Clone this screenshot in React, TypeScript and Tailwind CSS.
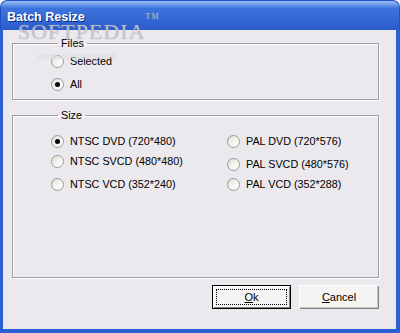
import { useState } from 'react'

const ui = { fontFamily: '"Liberation Sans", Arial, sans-serif' }

// XP-ish radio circle, drawn with css only
const Radio = ({ checked, label, onClick, className = '' }: { checked: boolean, label: string, onClick: () => void, className?: string }) => (
  <div className={`flex items-center h-[14px] cursor-default ${className}`} onClick={onClick}>
    <div className="w-[13px] h-[13px] rounded-full border border-[#9c9a94] bg-gradient-to-br from-[#dcdad5] via-[#f4f3ee] to-white flex items-center justify-center">
      {checked && <div className="w-[5px] h-[5px] rounded-full bg-black" />}
    </div>
    <span className="ml-[6px] text-[10.8px] leading-[14px] text-black">{label}</span>
  </div>
)

const Group = ({ title, className = '', children }: { title: string, className?: string, children: React.ReactNode }) => (
  <fieldset className={`border border-[#a0a0a0] shadow-[1px_1px_0_#fff,inset_1px_1px_0_#fff] ${className}`}>
    <legend className="ml-[7px] px-[3px] text-[10.8px] leading-[14px] text-black">{title}</legend>
    {children}
  </fieldset>
)

const App = () => {
  const [files, setFiles] = useState('all')
  const [size, setSize] = useState('ntsc-dvd')

  return (
    <div className="relative w-[400px] h-[333px] bg-white flex flex-col overflow-hidden select-none" style={ui}>
      {/* title bar */}
      <div className="h-[30px] shrink-0 rounded-t-[7px] bg-gradient-to-b from-[#9cc0f6] via-[#3d74dc] via-25% to-[#2a5bcc] border border-b-0 border-[#1f4fc4] flex items-center pl-[6px] pt-[3px]">
        <span className="text-white font-bold text-[12.5px] [text-shadow:1px_1px_0_#0c2a86]">Batch Resize</span>
      </div>

      {/* client area */}
      <div className="flex-1 flex flex-col bg-[#ebe9ed] border-l-[3px] border-r-[4px] border-b-[4px] border-[#2a5fd6] pl-[9px] pr-[17px] pt-[6px]">
        <Group title="Files" className="h-[64px] pl-[38px] pt-[4px]">
          <Radio checked={files === 'selected'} label="Selected" onClick={() => setFiles('selected')} />
          <Radio checked={files === 'all'} label="All" onClick={() => setFiles('all')} className="mt-[9px]" />
        </Group>

        <Group title="Size" className="mt-[8px] h-[170px] pl-[38px] pt-[12px]">
          <div className="flex">
            <div className="w-[176px] flex flex-col">
              <Radio checked={size === 'ntsc-dvd'} label="NTSC DVD (720*480)" onClick={() => setSize('ntsc-dvd')} />
              <Radio checked={size === 'ntsc-svcd'} label="NTSC SVCD (480*480)" onClick={() => setSize('ntsc-svcd')} className="mt-[6px]" />
              <Radio checked={size === 'ntsc-vcd'} label="NTSC VCD (352*240)" onClick={() => setSize('ntsc-vcd')} className="mt-[9px]" />
            </div>
            <div className="flex flex-col">
              <Radio checked={size === 'pal-dvd'} label="PAL DVD (720*576)" onClick={() => setSize('pal-dvd')} />
              <Radio checked={size === 'pal-svcd'} label="PAL SVCD (480*576)" onClick={() => setSize('pal-svcd')} className="mt-[9px]" />
              <Radio checked={size === 'pal-vcd'} label="PAL VCD (352*288)" onClick={() => setSize('pal-vcd')} className="mt-[6px]" />
            </div>
          </div>
        </Group>

        {/* buttons */}
        <div className="flex justify-end gap-[8px] mt-[7px]">
          <button className="w-[79px] h-[24px] border border-black bg-[#f5f4f2] shadow-[inset_1px_1px_0_#fff,inset_-1px_-1px_0_#808080] flex items-center justify-center p-[3px]">
            <span className="w-full h-full border border-dotted border-black flex items-center justify-center text-[11px] text-black">
              <u>O</u>k
            </span>
          </button>
          <button className="w-[80px] h-[24px] bg-[#f5f4f2] shadow-[inset_1px_1px_0_#fff,inset_-1px_-1px_0_#808080,inset_-2px_-2px_0_#c8c6c0] flex items-center justify-center text-[11px] text-black">
            <span><u>C</u>ancel</span>
          </button>
        </div>
      </div>

      {/* softpedia watermark overlay */}
      <div className="absolute left-[18px] top-[21px] text-[22px] leading-[22px] tracking-[1px] text-white/40 [text-shadow:0_0_1px_#9a9aa0] pointer-events-none" style={{ fontFamily: '"Liberation Serif", serif' }}>
        SOFTPEDIA<sup className="text-[8px] align-top">TM</sup>
      </div>
      <div className="absolute left-[38px] top-[50px] text-[9px] text-white/70 [text-shadow:0_0_1px_#b8b8bc] pointer-events-none">
        www.softpedia.com
      </div>
    </div>
  )
}

export default App
